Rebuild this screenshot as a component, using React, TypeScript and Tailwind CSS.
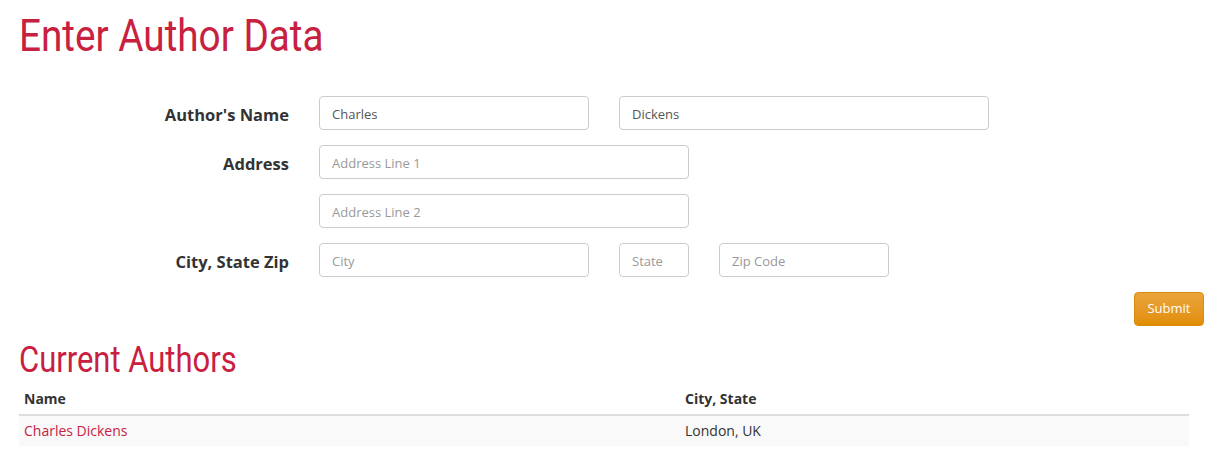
import React from "react";

const inputCls =
  "h-[34px] rounded-[4px] border border-[#cccccc] bg-white px-3 pt-[1px] text-[13px] text-[#555555] placeholder:text-[#999999] outline-none";

function Row({ label, children }: { label?: string; children: React.ReactNode }) {
  return (
    <div className="flex items-center">
      <label className="w-[270px] pt-[4px] text-right text-[16.5px] font-bold text-[#333333]">{label}</label>
      <div className="ml-[30px] flex gap-[30px]">{children}</div>
    </div>
  );
}

export default function App() {
  return (
    <div
      className="min-h-[468px] bg-white px-[19px] text-[14px] text-[#333333]"
      style={{ fontFamily: '"Open Sans", "Segoe UI", sans-serif' }}
    >
      <h1
        className="pt-[9px] text-[45px] leading-[54px] text-[#c8203f]"
        style={{ fontFamily: "Roboto, sans-serif" }}
      >
        <span className="inline-block origin-left scale-x-[0.86]">Enter Author Data</span>
      </h1>

      <form className="mt-[33px] flex flex-col gap-[15px]">
        <Row label="Author's Name">
          <input className={`${inputCls} w-[270px]`} defaultValue="Charles" />
          <input className={`${inputCls} w-[370px]`} defaultValue="Dickens" />
        </Row>
        <Row label="Address">
          <input className={`${inputCls} w-[370px]`} placeholder="Address Line 1" />
        </Row>
        <Row>
          <input className={`${inputCls} w-[370px]`} placeholder="Address Line 2" />
        </Row>
        <Row label="City, State Zip">
          <input className={`${inputCls} w-[270px]`} placeholder="City" />
          <input className={`${inputCls} w-[70px]`} placeholder="State" />
          <input className={`${inputCls} w-[170px]`} placeholder="Zip Code" />
        </Row>
        <div className="-mr-[5px] flex justify-end">
          <button
            type="button"
            className="h-[34px] w-[70px] rounded-[4px] border border-[#d98b0a] bg-gradient-to-b from-[#eba43a] to-[#e08e00] text-[13px] text-white"
          >
            Submit
          </button>
        </div>
      </form>

      <h2
        className="mt-[14px] text-[36px] leading-[40px] text-[#c8203f]"
        style={{ fontFamily: "Roboto, sans-serif" }}
      >
        <span className="inline-block origin-left scale-x-[0.86]">Current Authors</span>
      </h2>

      <table className="mt-[4px] w-[1170px] border-collapse text-[14px] leading-[20px]">
        <thead>
          <tr className="border-b-2 border-[#dddddd]">
            <th className="w-[666px] px-[5px] py-[5px] text-left font-bold">Name</th>
            <th className="px-[0px] py-[5px] text-left font-bold">City, State</th>
          </tr>
        </thead>
        <tbody>
          <tr className="bg-[#f9f9f9]">
            <td className="px-[5px] py-[5px] text-[#c8203f]">Charles Dickens</td>
            <td className="px-[0px] py-[5px]">London, UK</td>
          </tr>
        </tbody>
      </table>
    </div>
  );
}
